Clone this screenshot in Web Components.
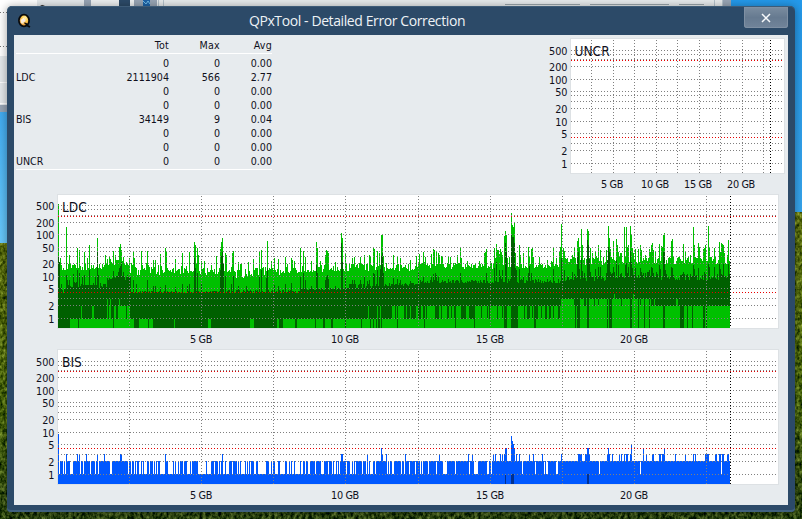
<!DOCTYPE html>
<html lang="en">
<head>
<meta charset="utf-8">
<title>QPxTool - Detailed Error Correction</title>
<style>
html,body{margin:0;height:100%;overflow:hidden}
body{font-family:"DejaVu Sans Condensed","DejaVu Sans",sans-serif;font-stretch:condensed;color:#10101c}
</style>
</head>
<body>
<qpx-desktop>
  <qpx-window caption="QPxTool - Detailed Error Correction">
    <error-table slot="table"></error-table>
    <error-plot slot="small" kind="uncr"></error-plot>
    <error-plot slot="plots" kind="ldc"></error-plot>
    <error-plot slot="plots" kind="bis"></error-plot>
  </qpx-window>
</qpx-desktop>
<script>
class QpxDesktop extends HTMLElement{
  constructor(){
    super();
    this.attachShadow({mode:'open'}).innerHTML=`
<style>
:host{display:block;position:relative;width:802px;height:519px;box-sizing:border-box;padding:6px 7px 7px;overflow:hidden}
.bg{position:absolute;inset:0;display:block}
::slotted(*){position:relative}
</style>
<svg class="bg" width="802" height="519" viewBox="0 0 802 519">
<defs>
<linearGradient id="sky" x1="0" y1="0" x2="0" y2="1"><stop offset="0" stop-color="#2499ea"/><stop offset="1" stop-color="#52b8f4"/></linearGradient>
<linearGradient id="skyl" x1="0" y1="0" x2="0" y2="1"><stop offset="0" stop-color="#3fa9ef"/><stop offset="1" stop-color="#68c9fb"/></linearGradient>
<linearGradient id="gr" x1="0" y1="0" x2="0" y2="1"><stop offset="0" stop-color="#5a6d0e"/><stop offset=".6" stop-color="#466309"/><stop offset="1" stop-color="#2b4410"/></linearGradient>
<filter id="grass" x="0" y="0" width="1" height="1" color-interpolation-filters="sRGB"><feTurbulence type="fractalNoise" baseFrequency=".32 .24" numOctaves="3" seed="9" result="n"/>
<feColorMatrix in="n" values="1 0 0 0 0  1 0 0 0 0  .6 0 0 0 .2  0 0 0 0 1" result="c"/>
<feComposite in="SourceGraphic" in2="c" operator="arithmetic" k2="1" k3=".8" k4="-.4"/></filter>
<filter id="sh" x="-.1" y="-.1" width="1.2" height="1.2"><feGaussianBlur stdDeviation="4"/></filter>
</defs>
<rect width="802" height="519" fill="url(#sky)"/>
<rect y="100" width="20" height="143" fill="url(#skyl)"/>
<rect y="243" width="400" height="276" fill="url(#gr)" filter="url(#grass)"/>
<rect x="400" y="212" width="402" height="307" fill="url(#gr)" filter="url(#grass)"/>
<rect width="731" height="112" fill="#98a5b5"/>
<rect width="84" height="105" fill="#e5e9ec"/>
<rect width="37" height="56" fill="#fff"/>
<path d="M0 12.5H7M0 46.5H7" stroke="#777" stroke-dasharray="1 2"/>
<path d="M0 82.5H7M0 103.5H7" stroke="#fff"/>
<path d="M40 6.500 q2-2 5 0" stroke="#000" fill="none"/>
<rect x="84" width="7" height="8" fill="#98a5b5"/><rect x="91" width="28" height="8" fill="#eceff0"/>
<rect x="119" width="11" height="8" fill="#2c4a68"/><rect x="130" width="4" height="8" fill="#edf0f1"/>
<rect x="134" width="23" height="8" fill="#98a5b5"/><rect x="143" width="7" height="8" fill="#1d63a8"/><path d="M143 1l3 3 2-3 2 3" stroke="#72bce8" fill="none"/>
<rect x="157" width="566" height="8" fill="#e6eaec"/>
<path d="M158.500 0V6M163.500 0V6M714.500 0V6M722.500 0V6" stroke="#b5c2cb"/>
<path d="M505 4.500h75M590 4.500h79M679 4.500h25" stroke="#9aa5aa"/>
<rect x="6" y="6" width="790" height="508" rx="6" fill="#000" opacity=".32" filter="url(#sh)"/>
</svg>
<slot></slot>`;
  }
}
class QpxWindow extends HTMLElement{
  connectedCallback(){
    this.attachShadow({mode:'open'}).innerHTML=`
<style>
:host{display:grid;grid-template-rows:29px 470px;box-sizing:border-box;width:788px;height:506px;padding:0 7px;background:#2c4a68;border-radius:5px 5px 4px 4px;box-shadow:inset 0 1px #3d5b77,inset 0 -2px #40607f}
header{display:grid;grid-template-columns:44px 598px 88px 44px;align-items:start}
.q{display:block;margin:7px 0 0 2px}
h1{margin:0;padding:5px 0 0 0;font:14px/20px "Open Sans","Noto Sans",sans-serif;color:#eef2f6;text-align:center;white-space:nowrap;letter-spacing:-.4px}
button{grid-column:4;margin:1px 0 0;padding:0;width:44px;height:21px;border:0;border-radius:0 0 3px 3px;background:linear-gradient(#7b8da0,#667a90 50%,#71849a);box-shadow:inset 0 0 0 1px #7f90a3;display:flex;align-items:center;justify-content:center}
main{background:#e7ebee;display:grid;grid-template-columns:526px 248px;grid-template-rows:157px 313px}
.p{grid-column:1/3;display:flex;flex-direction:column}
</style>
<header>
<svg class="q" width="17" height="17" viewBox="0 0 17 17"><defs><radialGradient id="g" cx=".6" cy=".3"><stop offset="0" stop-color="#fff0ba"/><stop offset=".5" stop-color="#ffd457"/><stop offset="1" stop-color="#f0a53c"/></radialGradient></defs>
<ellipse cx="8" cy="7.500" rx="5.100" ry="5.900" fill="url(#g)" stroke="#08090b" stroke-width="1.700"/><path d="M4.500 7L8 4.500 7.500 11 5 10Z" fill="#fff" opacity=".75"/><path d="M8.500 10.500Q10 10 12 13L14 14" stroke="#08090b" stroke-width="1.800" fill="none"/><circle cx="8" cy="7.500" r="1.400" fill="#f5e5e8"/></svg>
<h1></h1>
<button aria-label="Close"><svg width="10" height="10" viewBox="0 0 10 10"><path d="M1 1L9 9M9 1L1 9" stroke="#f7f9fb" stroke-width="1.500"/></svg></button>
</header>
<main><slot name="table"></slot><slot name="small"></slot><div class="p"><slot name="plots"></slot></div></main>`;
    this.shadowRoot.querySelector('h1').textContent=this.getAttribute('caption');
  }
}
class ErrorTable extends HTMLElement{
  constructor(){
    super();
    const rows=[['','0','0','0.00'],['LDC','2111904','566','2.77'],['','0','0','0.00'],['','0','0','0.00'],['BIS','34149','9','0.04'],['','0','0','0.00'],['','0','0','0.00'],['UNCR','0','0','0.00']];
    const row=(r,c='')=>`<div class="r ${c}">${r.map(t=>`<span>${t}</span>`).join('')}</div>`;
    this.attachShadow({mode:'open'}).innerHTML=`
<style>
:host{display:block;padding:3px 0 0 2px;font-size:10.6px;line-height:14px}
.t{width:256px}
.r{display:grid;grid-template-columns:52px 101px 51px 52px;height:14px}
.r span{text-align:right;white-space:nowrap}
.r span:first-child{text-align:left}
.h{height:15px;border-bottom:1px solid #fff;margin-bottom:2px;letter-spacing:.25px}
.e{height:1px;background:#fff;margin-top:1px}
</style><div class="t">${row(['','Tot','Max','Avg'],'h')}${rows.map(r=>row(r)).join('')}<div class="e"></div></div>`;
  }
}
const PLOTS={
  uncr:{view:[540,35,248,157],box:[571,39,213,134],end:782,title:'UNCR',tx:574.5,ty:56,
    lines:[50,54,59,66,79,91,95,101,108,121,133,143,150,163],red:[60,137],
    cols:[591,613,634,656,677,699,720,742,763],black:770,gb:[[612,'5'],[655,'10'],[698,'15'],[741,'20']],gy:188,
    labels:[55,71,84,96,113,126,138,155,168],lx:567.500},
  ldc:{view:[14,192,774,156],box:[58,195,720,133],end:776,title:'LDC',tx:62,ty:212,
    lines:[205,209,215,222,234,247,251,256,263,276,288,298,305,318],red:[216,292],
    cols:[129,201,273,345,418,490,562,634,706],black:730,gb:[[201,'5'],[345,'10'],[490,'15'],[634,'20']],gy:343,
    labels:[210,227,239,252,268,281,293,310,323],lx:54.500},
  bis:{view:[14,348,774,157],box:[58,350,720,134],end:776,title:'BIS',tx:62,ty:367,
    lines:[361,365,370,377,390,402,406,412,419,432,444,454,461,474],red:[371,448],
    cols:[129,201,273,345,418,490,562,634,706],black:730,gb:[[201,'5'],[345,'10'],[490,'15'],[634,'20']],gy:499,
    labels:[366,382,395,407,424,437,449,466,479],lx:54.500}
};
const pairs=s=>s.trim().split(/\s+/).map(p=>p.split(',').map(Number));
function rng(seed){return()=>{seed=(seed*1664525+1013904223)>>>0;return seed/4294967296}}
const PEAKS=pairs(`58,204 60,258 62,270 66,227 69,255 77,248 79,250 84,252 89,245 97,238 105,255 109,257 113,251 115,255 119,247 120,244 121,250 123,257 129,258 133,251 134,258 141,251 147,251 153,260 155,260 160,254 165,248 166,252 175,259 182,253 189,252 194,242 195,245 197,248 198,255 201,261 216,256 220,249 221,242 222,238 225,253 226,255 232,253 233,251 238,262 241,263 248,262 253,259 259,252 261,250 267,241 274,258 278,259 285,257 291,258 292,260 294,261 300,248 303,251 305,257 311,261 316,242 317,248 325,255 326,250 327,251 328,253 335,262 341,233 342,238 345,253 352,258 354,257 360,257 364,255 369,255 370,257 373,247 374,249 377,251 379,253 381,235 382,234 383,256 393,255 397,256 400,258 410,260 416,256 419,254 423,252 425,257 431,254 433,249 434,250 436,251 438,253 439,255 442,257 448,256 450,257 457,255 460,247 461,258 467,261 479,261 484,253 485,252 486,249 494,248 495,258 496,244 497,250 498,250 499,254 500,249 501,252 502,255 504,236 505,231 506,235 507,258 509,257 511,213 512,225 513,227 514,222 515,253 519,245 520,255 523,253 528,247 529,257 531,249 532,248 533,257 547,260 553,247 556,258 559,251 560,247 561,224 562,258 563,248 564,251 571,259 572,255 574,248 577,241 578,238 579,247 581,229 582,245 584,258 587,229 588,231 590,248 592,253 595,251 596,256 598,245 600,250 603,257 606,250 608,226 609,238 610,249 613,241 616,239 617,245 618,252 621,253 624,227 626,227 627,247 628,245 630,226 631,235 632,248 635,249 638,249 640,245 641,250 645,255 649,249 650,252 651,245 652,243 653,250 655,252 659,244 661,246 662,247 663,235 664,233 668,258 671,241 672,239 673,257 683,244 685,252 687,258 693,227 694,245 695,257 698,243 699,247 703,249 704,248 705,245 708,226 709,247 711,257 714,248 719,242 720,252 721,243 722,244 723,245 724,253 728,240 729,261`);
const DARK=pairs(`58,257 59,262 61,284 66,275 67,280 69,280 73,274 75,283 77,270 79,273 82,277 84,275 89,270 95,277 97,251 98,275 109,278 113,271 116,276 117,276 118,272 119,268 120,266 121,262 123,272 127,275 129,278 133,280 136,284 147,280 153,286 155,286 160,287 165,285 175,287 182,284 187,286 189,284 194,258 195,268 197,273 201,284 220,270 221,256 222,252 223,264 225,276 231,284 233,276 238,286 246,286 259,277 261,270 266,278 267,268 274,285 278,286 285,284 291,283 300,277 303,273 305,280 311,286 316,265 317,273 325,280 326,277 327,275 328,279 335,286 341,243 342,262 345,278 352,280 354,280 360,280 364,277 367,281 369,280 373,273 374,274 377,270 379,277 380,269 381,256 382,253 383,273 393,278 397,279 400,280 410,281 418,273 423,277 431,277 433,274 435,273 436,275 438,277 448,279 460,273 484,280 486,273 494,268 496,262 499,270 500,276 502,270 505,243 506,252 511,235 512,237 513,237 514,243 515,268 516,270 519,269 523,276 528,273 529,266 531,273 553,269 561,258 562,274 564,270 572,272 574,274 577,257 578,252 579,269 581,258 582,271 584,273 587,240 588,245 589,259 590,272 595,269 598,267 600,267 606,273 607,260 608,247 609,252 613,267 616,260 618,265 621,273 625,265 626,263 628,267 630,251 631,262 632,268 635,268 640,268 645,273 649,270 651,267 652,268 656,272 659,265 660,269 663,252 664,252 665,270 671,267 672,268 683,272 693,265 694,269 698,268 704,272 708,264 709,267 714,267 719,264 720,269 723,264 728,264`);
const level=(x,steps)=>{for(const s of steps)if(x<s[0])return s;};
function ldcBars(){
  const r=rng(57),top={},dk={};
  PEAKS.forEach(([x,y])=>top[x]=y);DARK.forEach(([x,y])=>dk[x]=y);
  const dots=new Set([81,92,93]);
  let a='',b='',c='';
  const dense=[[70,0],[81,.85],[107,.85],[131,.9],[153,.3],[243,.03],[286,.08],[345,.7],[385,.82],[560,.92],[730,.84]];
  let run=0,val=0,run2=0,d3=0;
  for(let x=58;x<730;x++){
    const [,lo,hi]=level(x,[[62,260,272],[90,264,270],[107,264,269],[130,259,266],[160,265,275],[220,268,275],[255,270,278],[300,267,275],[345,266,272],[420,263,271],[500,263,269],[560,264,268],[608,258,265],[731,257,264]]);
    const n=lo+Math.floor(r()*(hi-lo+1))-(r()<.16?Math.floor(r()*8):0);
    const t=top[x]??n;
    const [,dl,dh]=level(x,[[65,288,293],[73,285,293],[84,282,287],[98,283,285],[107,283,288],[131,276,280],[220,291,293],[300,290,293],[345,288,290],[385,284,288],[420,283,286],[500,280,283],[560,279,283],[608,276,281],[655,272,278],[731,274,280]]);
    let d=dk[x]??dl+Math.floor(r()*(dh-dl+1));
    a+=`M${x} ${t}h1V328h-1z`;
    b+=`M${x} ${d}h1V328h-1z`;
    if(run--<=0){val=r()<level(x,dense)[1]?1:0;run=val?Math.floor(r()*4):(r()<.2?1:0)}
    if(run2--<=0){d3=r()<(x<560?.5:.72)?1:0;run2=d3?Math.floor(r()*(x<560?3:4)):0}
    let y=val?319:328;
    if(x>=107&&x<131&&val)y=d3?(r()<.35?299:306):319;
    if(dots.has(x))y=306;
    if(x>=345&&x<386&&r()<.07)y=306;
    if(x>=386&&x<560&&val&&d3)y=306;
    if(x>=560&&x<610&&val)y=d3?299:306;
    if(x>=610&&x<655&&val)y=d3?299:306;
    if(x>=655&&val)y=r()<.08?299:306;
    if((x>=609&&x<=611)||(x>=504&&x<=506)||(x>=511&&x<=514)||(x>=577&&x<=579)||(x>=587&&x<=588)||(x>=630&&x<=631)||(x>=663&&x<=664))y=328;
    if([614,633].includes(x))y=294;
    if(x===105||x===106)y=319;
    c+=`M${x} ${y}h1V328h-1z`;
  }
  return `<path d="${a}" fill="#00c000"/><path d="${b}" fill="#006000"/><path d="${c}" fill="#00c000"/>`;
}
function bisBars(){
  const h=new Array(730).fill(474);
  const fill=(o,list,y)=>pairs(list).forEach(([s,e])=>{for(let x=Math.round(o+s/3);x<Math.round(o+e/3);x++)h[x]=y});
  fill(0,'180,189 192,195 198,210 219,240 243,249 252,270 273,284 288,294 297,330 336,384 387,393 396,402 405,408 411,417 423,426 429,432 441,447 450,459 462,465 468,471 474,480 495,504 519,522 525,528 534,537 540,549 552,561 570,573 576,594 618,621 633,642 645,654 657,660 663,669 675,678 687,696 699,711 714,717 720,723 735,738 741,744 747,750 753,762 768,774 798,807',461);
  fill(0,'198,201 231,234 237,240 258,261 291,294 312,315 360,366 495,498 666,669',454);
  fill(260,'18,27 33,36 39,45 54,60 75,81 87,90 93,96 102,105 120,123 129,135 138,141 142,145 150,165 168,183 192,204 207,216 219,222 228,231 234,237 240,258 261,270 276,279 282,285 288,306 309,318 321,324 327,330 339,345 348,381 384,387 390,396 402,423 426,432 435,447 450,465 468,480 483,486 489,504 507,528 531,549 561,585 588,627 630,642 654,681 687,693 696,786 789,816',461);
  fill(260,'243,249 321,324 366,369 378,381 435,438 537,540 624,627 636,639 699,702 705,708 720,723 726,729 732,735 768,771 777,780',454);
  fill(260,'363,366 735,741 762,765',448);
  fill(260,'753,756',436);fill(260,'756,759',441);fill(260,'759,762',444);
  fill(520,'30,45 48,72 75,78 84,108 114,237 240,360 363,603 606,630',461);
  fill(520,'27,30 39,42 66,69 123,126 174,186 195,201 207,210 261,270 276,279 297,300 303,306 312,315 318,324 330,333 378,381 396,402 417,423 426,432 465,468 495,498 519,522 525,528 555,567 585,591 597,603 606,612 621,627',454);
  fill(520,'201,207 264,267 369,372 432,435',448);fill(520,'333,336',444);
  h[58]=434;
  let d='';for(let x=58;x<730;x++)d+=`M${x} ${h[x]}h1V484h-1z`;
  return `<path d="${d}" fill="#0058ff"/><path d="M505 475h1v9h-1zM511 474h3v10h-3zM587 474h2v10h-2z" fill="#003090"/>`;
}
class ErrorPlot extends HTMLElement{
  connectedCallback(){
    const kind=this.getAttribute('kind'),p=PLOTS[kind],[vx,vy,w,h]=p.view,[x,y,bw,bh]=p.box;
    const names=[500,200,100,50,20,10,5,2,1];
    const hl=(a,c)=>`<path d="${a.map(v=>`M${x} ${v+.5}H${p.end}`).join('')}" stroke="${c}" stroke-dasharray="1 2"/>`;
    const vl=(a,c)=>`<path d="${a.map(v=>`M${v+.5} ${y+1}V${y+bh}`).join('')}" stroke="${c}" stroke-dasharray="1 2"/>`;
    this.attachShadow({mode:'open'}).innerHTML=`
<style>:host{display:block;width:${w}px;height:${h}px}svg{display:block}text{font-size:10.8px;fill:#10101c}.n{font-size:13.6px}path,rect{shape-rendering:crispEdges}</style>
<svg width="${w}" height="${h}" viewBox="${vx} ${vy} ${w} ${h}">
<rect x="${x-.5}" y="${y-.5}" width="${bw+1}" height="${bh+1}" fill="#fff" stroke="#dde1e4"/>
${kind==='ldc'?ldcBars():kind==='bis'?bisBars():''}
${hl(p.lines,'#808080')}${vl(p.cols,'#808080')}${hl(p.red,'#e80000')}${vl([p.black],'#000')}
<text class="n" x="${p.tx}" y="${p.ty}">${p.title}</text>
${names.map((n,i)=>`<text x="${p.lx}" y="${p.labels[i]}" text-anchor="end">${n}</text>`).join('')}
${p.gb.map(([gx,n])=>`<text x="${gx}" y="${p.gy}" text-anchor="middle" letter-spacing="-.35">${n} GB</text>`).join('')}
</svg>`;
  }
}
customElements.define('error-plot',ErrorPlot);
customElements.define('error-table',ErrorTable);
customElements.define('qpx-window',QpxWindow);
customElements.define('qpx-desktop',QpxDesktop);
</script>
</body>
</html>
